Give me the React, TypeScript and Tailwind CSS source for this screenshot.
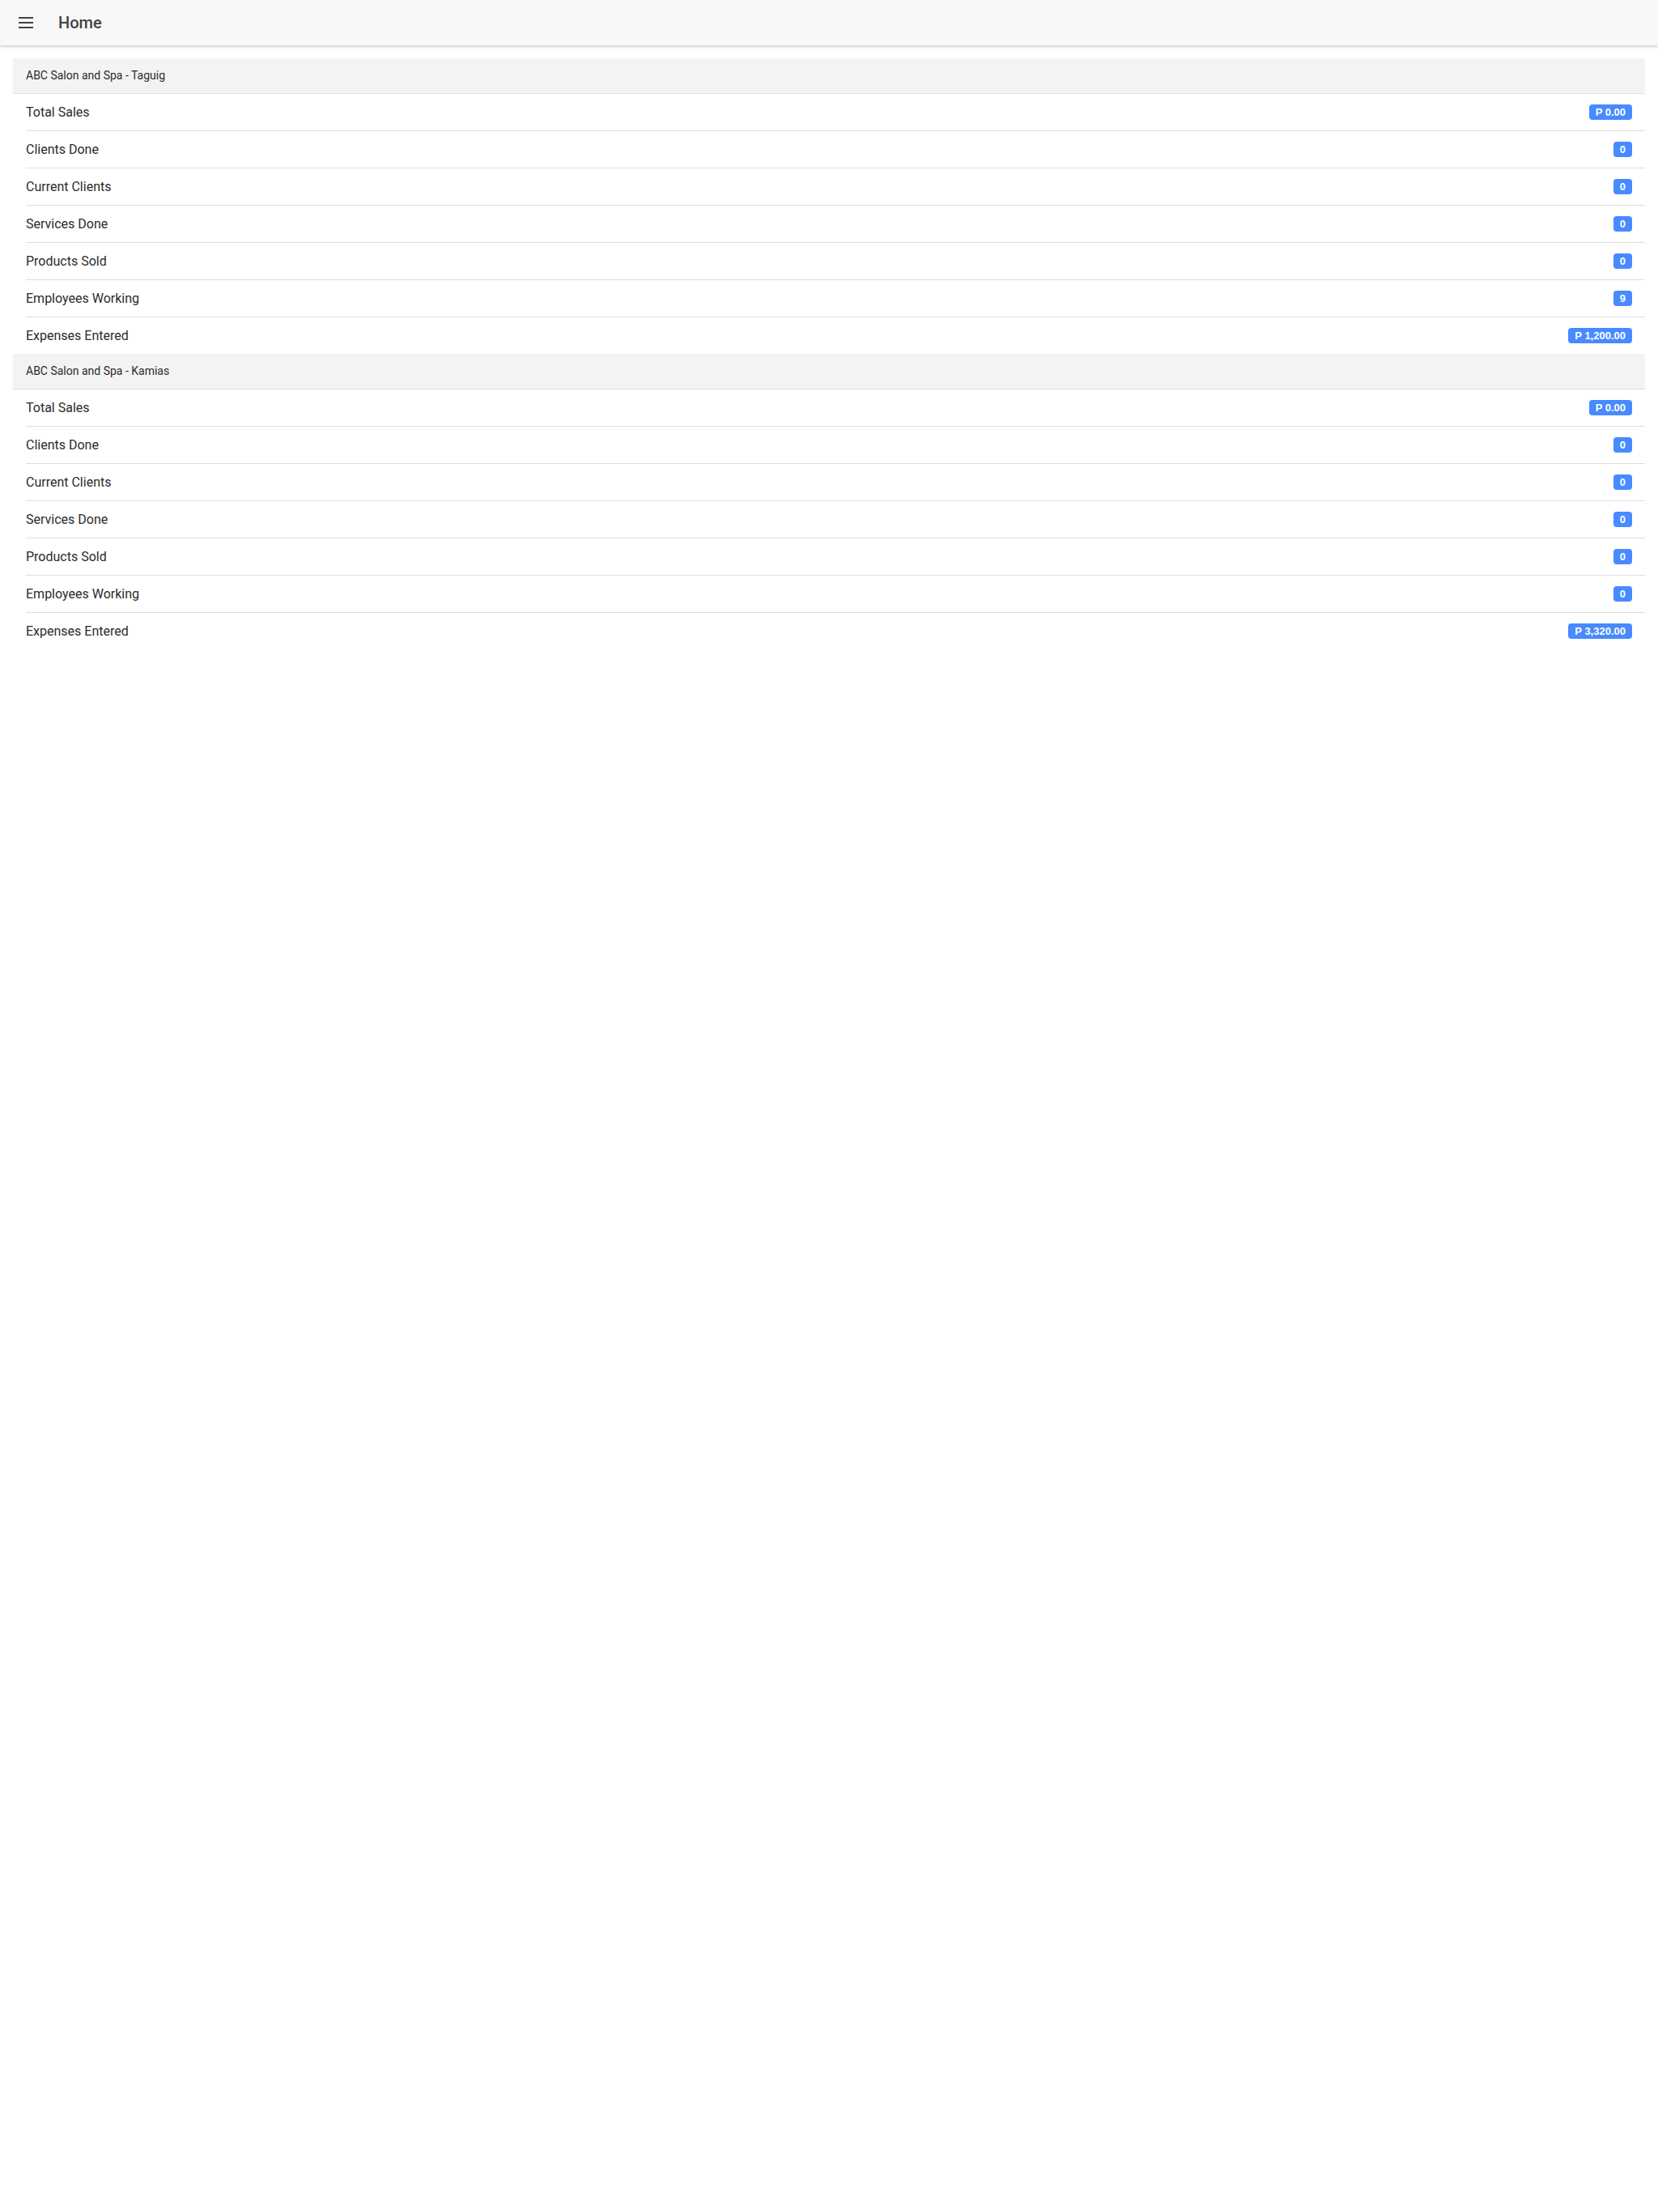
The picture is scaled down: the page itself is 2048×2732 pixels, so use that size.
import React from "react";

type Row = { label: string; value: string };

const sections: { title: string; rows: Row[] }[] = [
  {
    title: "ABC Salon and Spa - Taguig",
    rows: [
      { label: "Total Sales", value: "P 0.00" },
      { label: "Clients Done", value: "0" },
      { label: "Current Clients", value: "0" },
      { label: "Services Done", value: "0" },
      { label: "Products Sold", value: "0" },
      { label: "Employees Working", value: "9" },
      { label: "Expenses Entered", value: "P 1,200.00" },
    ],
  },
  {
    title: "ABC Salon and Spa - Kamias",
    rows: [
      { label: "Total Sales", value: "P 0.00" },
      { label: "Clients Done", value: "0" },
      { label: "Current Clients", value: "0" },
      { label: "Services Done", value: "0" },
      { label: "Products Sold", value: "0" },
      { label: "Employees Working", value: "0" },
      { label: "Expenses Entered", value: "P 3,320.00" },
    ],
  },
];

export default function App() {
  return (
    <div className="min-h-[2732px] bg-white font-['Roboto','Noto_Sans',sans-serif]">
      <header className="relative z-10 flex h-[56px] items-center bg-[#f8f8f8] shadow-[0_2px_3px_rgba(0,0,0,0.18)]">
        <div className="flex w-[72px] items-center pl-[23px]">
          <svg width="18" height="14" viewBox="0 0 18 14">
            <rect x="0" y="0" width="18" height="2" fill="#424242" />
            <rect x="0" y="6" width="18" height="2" fill="#424242" />
            <rect x="0" y="12" width="18" height="2" fill="#424242" />
          </svg>
        </div>
        <h1 className="text-[20px] font-medium text-[#424242]">Home</h1>
      </header>
      <main className="px-4 pt-4">
        {sections.map((s) => (
          <section key={s.title}>
            <div className="flex h-[44px] items-center border-b border-[#dedede] bg-[#f3f3f3] pl-4 text-[14px] text-[#2b2b2b]">
              {s.title}
            </div>
            {s.rows.map((r, i) => (
              <div key={r.label} className="pl-4">
                <div
                  className={
                    i < s.rows.length - 1
                      ? "flex h-[46px] items-center justify-between border-b border-[#dedede] pr-4"
                      : "flex h-[45px] items-center justify-between pr-4"
                  }
                >
                  <span className="text-[16px] text-[#2b2b2b]">{r.label}</span>
                  <span className="rounded-[4px] bg-[#488aff] px-[8px] py-[3px] font-['Liberation_Sans',Arial,sans-serif] text-[13px] font-bold leading-[13px] text-white">
                    {r.value}
                  </span>
                </div>
              </div>
            ))}
          </section>
        ))}
      </main>
    </div>
  );
}
